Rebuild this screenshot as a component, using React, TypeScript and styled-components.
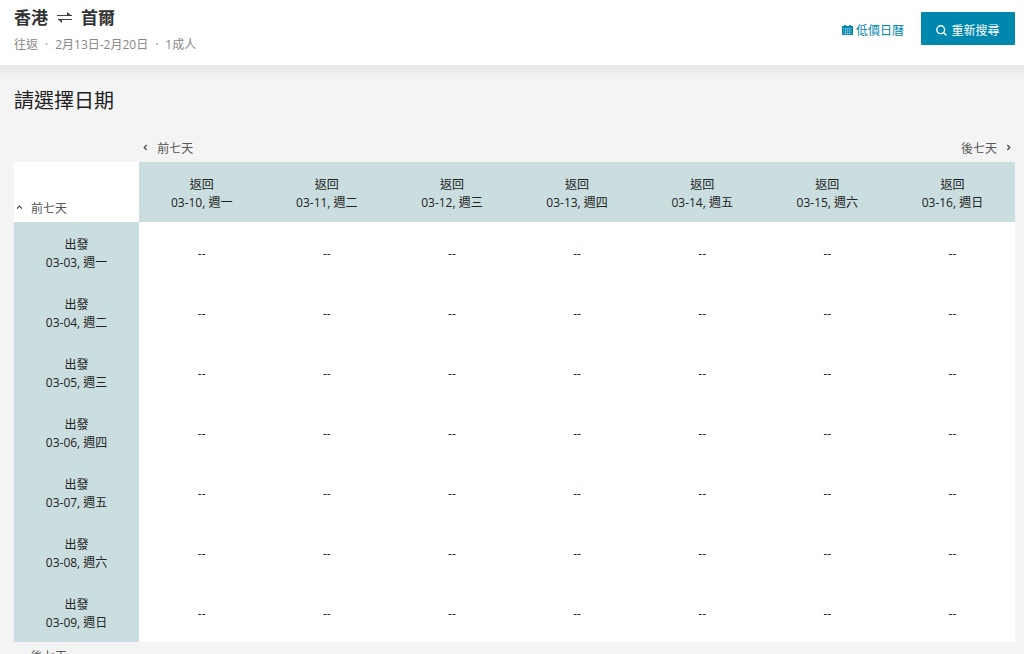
import React from "react";
import styled, { createGlobalStyle } from "styled-components";

const GlobalStyle = createGlobalStyle`
  * { box-sizing: border-box; }
  html { scrollbar-width: none; }
  body {
    margin: 0;
    background: #f4f4f4;
    color: #222;
    font-family: "Open Sans", "Noto Sans CJK TC", sans-serif;
    font-size: 12px;
    line-height: 18px;
  }
`;

const Header = styled.header`
  display: flex;
  justify-content: space-between;
  align-items: flex-start;
  height: 65px;
  padding: 6px 9px 0 14px;
  background: #fff;
`;

const Shade = styled.div`
  height: 16px;
  background: linear-gradient(#e5e6e8, #f4f4f4);
`;

const Route = styled.h1`
  display: flex;
  align-items: center;
  gap: 9px;
  margin: 0;
  font-size: 17px;
  line-height: 24px;
  font-weight: 700;
  color: #333;
`;

const Details = styled.p`
  display: flex;
  gap: 7px;
  margin: 6px 0 0;
  color: #888;
`;

const Actions = styled.div`
  display: flex;
  align-items: center;
  gap: 17px;
  padding-top: 6px;
`;

const CalendarLink = styled.a`
  display: flex;
  align-items: center;
  gap: 3px;
  padding-top: 5px;
  color: #0087ad;
  text-decoration: none;

  svg { margin-bottom: 2px; }
`;

const SearchButton = styled.button`
  display: flex;
  align-items: center;
  justify-content: center;
  gap: 4px;
  width: 94px;
  height: 33px;
  padding: 5px 0 0;
  border: 0;
  border-radius: 1px;
  background: #0087ad;
  color: #fff;
  font: inherit;
  cursor: pointer;

  svg { margin-bottom: 2px; }
`;

const Main = styled.main`
  padding: 5px 9px 12px 14px;
`;

const Title = styled.h2`
  margin: 0;
  font-size: 20px;
  line-height: 30px;
  font-weight: 400;
`;

const WeekBar = styled.div`
  display: flex;
  justify-content: space-between;
  margin: 24px 3px 4px 12.5%;
  padding-left: 3px;
`;

const WeekButton = styled.button`
  display: flex;
  align-items: center;
  gap: 8px;
  padding: 0;
  border: 0;
  background: none;
  color: #555;
  font: inherit;
  cursor: pointer;

  svg { margin-bottom: 3px; }
`;

const LaterRow = styled.div`
  display: flex;
  padding: 6px 0 0 2px;
`;

const Grid = styled.table`
  width: 100%;
  table-layout: fixed;
  border-collapse: collapse;
  background: #fff;
  text-align: center;

  tr { height: 60px; }
`;

const Corner = styled.td`
  padding: 0 0 4px 2px;
  vertical-align: bottom;
`;

const DateHead = styled.th`
  padding: 4px 0 0;
  background: #cadddf;
  font-weight: 400;
`;

const Price = styled.td`
  padding: 4px 0 0;
`;

const SwapIcon = () => (
  <svg width="15" height="12" viewBox="0 0 15 12" fill="none" stroke="#444" strokeWidth="1.2" aria-hidden="true">
    <path d="M0 3.5h15M15 7.5H1" />
    <path d="M10 0l4.7 3.5H10zM5 7.5V11L1 7.5z" fill="#444" stroke="none" />
  </svg>
);

const CalendarIcon = () => (
  <svg width="11" height="11" viewBox="0 0 11 11" aria-hidden="true">
    <path d="M2 0h2v1h3V0h2v1h2v9H0V1h2z" fill="#0087ad" />
    <path d="M1 3.5h9M1 6h9M1 8.5h9M3.5 3.5v6M5.5 3.5v6M7.5 3.5v6" stroke="#fff" strokeWidth=".4" strokeOpacity=".8" />
  </svg>
);

const SearchIcon = () => (
  <svg width="11" height="11" viewBox="0 0 11 11" fill="none" stroke="#fff" strokeWidth="1.4" aria-hidden="true">
    <circle cx="4.7" cy="4.7" r="3.9" />
    <path d="M7.5 7.5l3 3" />
  </svg>
);

const turns = { left: 0, up: 90, right: 180, down: 270 };

const Chevron = ({ to }: { to: keyof typeof turns }) => (
  <svg width="7" height="7" viewBox="0 0 7 7" fill="none" stroke="#444" strokeWidth="1.2" aria-hidden="true">
    <path d="M4.7 1L2.2 3.5L4.7 6" transform={`rotate(${turns[to]} 3.5 3.5)`} />
  </svg>
);

const weekdays = ["一", "二", "三", "四", "五", "六", "日"];
const returns = weekdays.map((d, i) => `03-${10 + i}, 週${d}`);
const departures = weekdays.map((d, i) => `03-0${3 + i}, 週${d}`);

export default function App() {
  return (
    <>
      <GlobalStyle />
      <Header>
        <div>
          <Route><span>香港</span><SwapIcon /><span>首爾</span></Route>
          <Details>
            <span>往返</span><span>·</span><span>2月13日-2月20日</span><span>·</span><span>1成人</span>
          </Details>
        </div>
        <Actions>
          <CalendarLink href="#calendar"><CalendarIcon />低價日曆</CalendarLink>
          <SearchButton type="button"><SearchIcon />重新搜尋</SearchButton>
        </Actions>
      </Header>
      <Shade />
      <Main>
        <Title>請選擇日期</Title>
        <WeekBar>
          <WeekButton type="button"><Chevron to="left" />前七天</WeekButton>
          <WeekButton type="button">後七天<Chevron to="right" /></WeekButton>
        </WeekBar>
        <Grid>
          <thead>
            <tr>
              <Corner><WeekButton type="button"><Chevron to="up" />前七天</WeekButton></Corner>
              {returns.map((date) => (
                <DateHead key={date} scope="col">返回<br />{date}</DateHead>
              ))}
            </tr>
          </thead>
          <tbody>
            {departures.map((date) => (
              <tr key={date}>
                <DateHead scope="row">出發<br />{date}</DateHead>
                {returns.map((r) => <Price key={r}>--</Price>)}
              </tr>
            ))}
          </tbody>
        </Grid>
        <LaterRow>
          <WeekButton type="button"><Chevron to="down" />後七天</WeekButton>
        </LaterRow>
      </Main>
    </>
  );
}
